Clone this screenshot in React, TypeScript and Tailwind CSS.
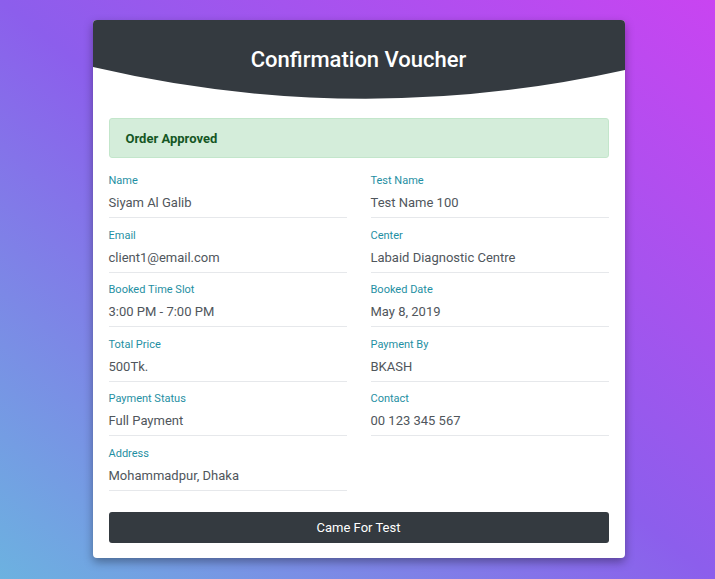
const fields: [string, string][] = [
  ["Name", "Siyam Al Galib"],
  ["Test Name", "Test Name 100"],
  ["Email", "client1@email.com"],
  ["Center", "Labaid Diagnostic Centre"],
  ["Booked Time Slot", "3:00 PM - 7:00 PM"],
  ["Booked Date", "May 8, 2019"],
  ["Total Price", "500Tk."],
  ["Payment By", "BKASH"],
  ["Payment Status", "Full Payment"],
  ["Contact", "00 123 345 567"],
  ["Address", "Mohammadpur, Dhaka"],
];

const Field = ({ label, value }: { label: string; value: string }) => (
  <div className="border-b border-[#e6e8eb] pb-1">
    <div className="text-[11px] leading-4 text-[#1f8fa3]">{label}</div>
    <div className="mt-1 text-[13px] leading-5 text-[#50565c]">{value}</div>
  </div>
);

export default function App() {
  return (
    <div
      className="flex min-h-[579px] w-full justify-center bg-[linear-gradient(to_top_right,#6cb2e0,#8c5eec_50%,#c944f1)] pt-5 pl-[2px]"
      style={{ fontFamily: "Roboto, 'Noto Sans', sans-serif" }}
    >
      <div className="h-fit w-[532px] overflow-hidden rounded bg-white shadow-[0_4px_10px_rgba(0,0,0,0.35)]">
        <div className="relative h-20">
          {/* curved dark header */}
          <svg
            className="absolute inset-0"
            width="532"
            height="80"
            viewBox="0 0 532 80"
            preserveAspectRatio="none"
          >
            <path d="M0 0 H532 V50 Q266 109 0 47 Z" fill="#343a40" />
          </svg>
          <h1 className="relative pt-[26px] text-center text-[22px] font-medium leading-7 text-white">
            Confirmation Voucher
          </h1>
        </div>

        <div className="px-4 pt-[18px] pb-[15px]">
          <div className="flex h-10 items-center rounded-[3px] border border-[#c3e6cb] bg-[#d4edda] px-4 pt-px text-[13px] font-bold text-[#155724]">
            Order Approved
          </div>

          <div className="mt-[15px] grid grid-cols-2 gap-x-6 gap-y-[9.6px]">
            {fields.map(([label, value]) => (
              <Field key={label} label={label} value={value} />
            ))}
          </div>

          <button className="mt-[21px] h-[31px] w-full rounded-[3px] bg-[#343a40] pt-px text-[13px] text-white">
            Came For Test
          </button>
        </div>
      </div>
    </div>
  );
}
